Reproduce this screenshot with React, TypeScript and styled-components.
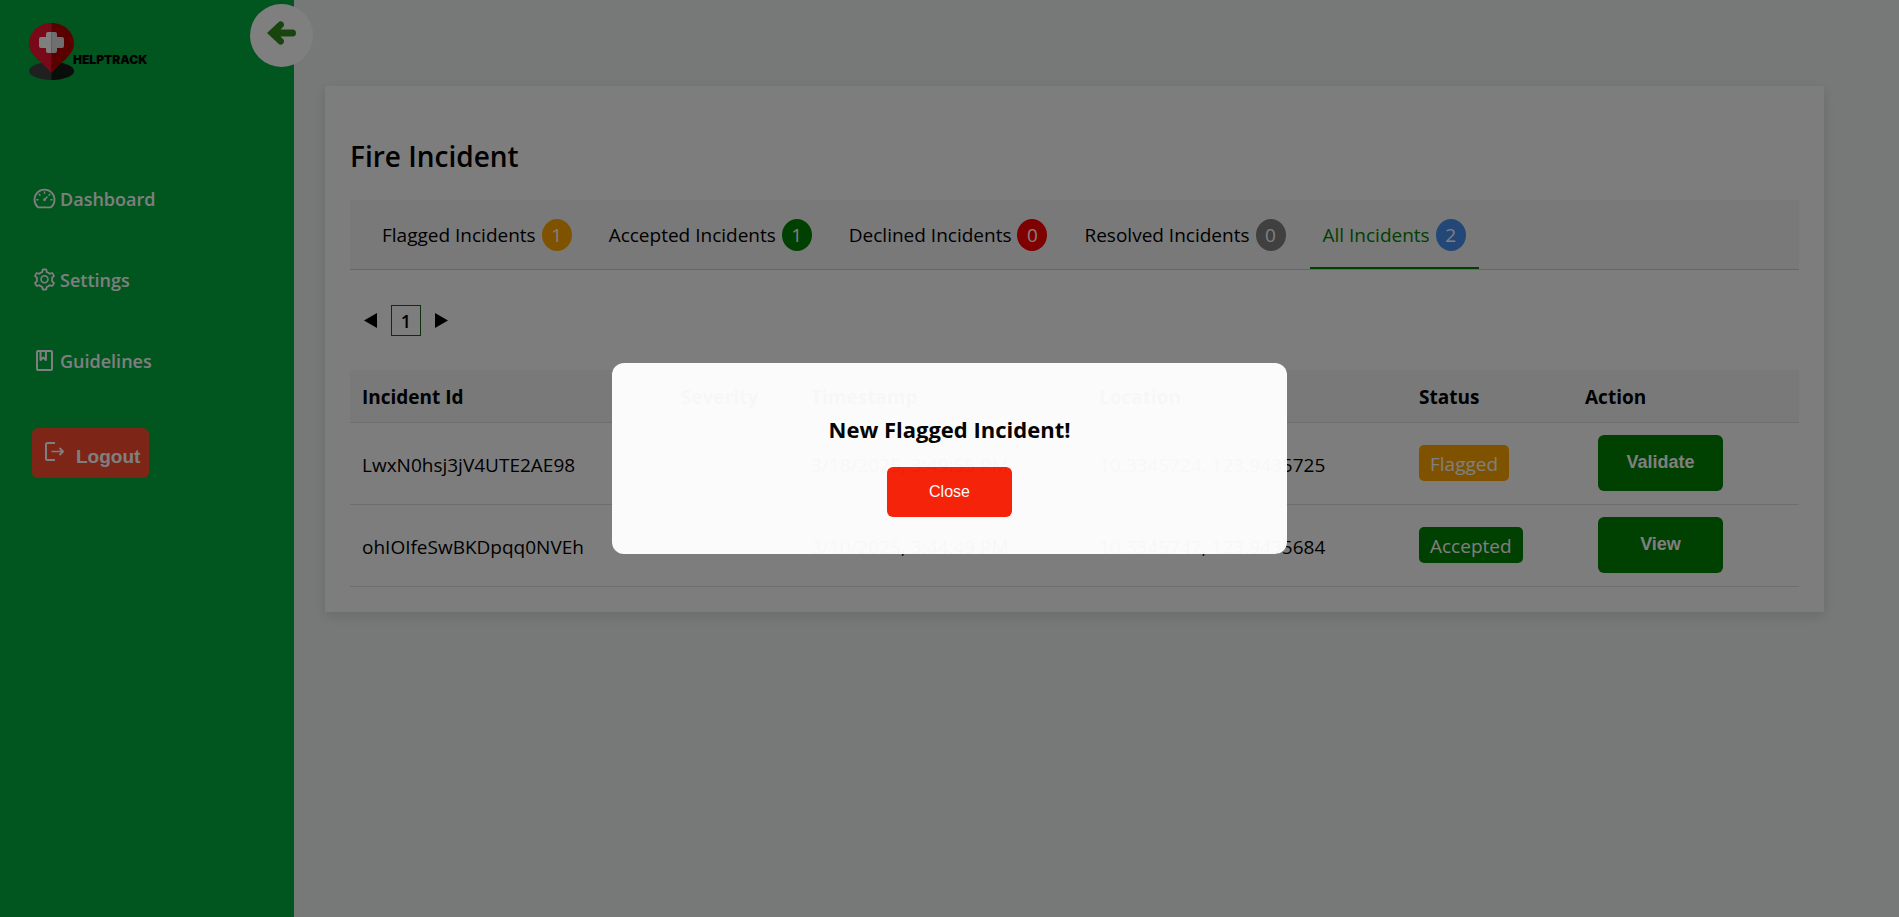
import React from 'react';
import styled, { createGlobalStyle } from 'styled-components';
import { AiOutlineDashboard, AiOutlineSetting } from 'react-icons/ai';

const uiFont = '"Segoe UI", "Open Sans", "Noto Sans", sans-serif';
const controlFont = 'Arial, "Liberation Sans", sans-serif';

const GlobalStyle = createGlobalStyle`
  *, *::before, *::after { box-sizing: border-box; }
  body {
    margin: 0;
    background: #eff3f2;
    color: #000;
    font-family: ${uiFont};
    font-size: 19px;
    line-height: 27px;
  }
`;

const Page = styled.div`
  display: flex;
  min-height: 100vh;
`;

const Sidebar = styled.aside`
  position: relative;
  flex: 0 0 294px;
  background: #00ac3c;
`;

const Brand = styled.a`
  display: flex;
  align-items: flex-end;
  height: 80px;
  padding-left: 29px;
  color: #000;
  text-decoration: none;
`;

const BrandName = styled.span`
  margin: 0 0 13px -1px;
  font: 900 12px/14px Inter, sans-serif;
`;

const Toggle = styled.button`
  position: absolute;
  top: 4px;
  right: -19px;
  display: flex;
  justify-content: center;
  align-items: center;
  width: 63px;
  height: 63px;
  padding: 0 0 6px;
  border: 0;
  border-radius: 50%;
  background: #fff;
  color: #2f8a1b;
`;

const Nav = styled.nav`
  display: flex;
  flex-direction: column;
  align-items: flex-start;
  gap: 54px;
  padding: 105px 32px 0;
`;

const NavLink = styled.a`
  display: flex;
  align-items: center;
  gap: 3px;
  color: #fff;
  font-size: 18px;
  font-weight: 600;
  text-decoration: none;

  svg { width: 25px; height: 25px; }
  span { padding-top: 1px; margin-bottom: -1px; }
`;

const Logout = styled.button`
  display: flex;
  align-items: center;
  gap: 9px;
  height: 50px;
  padding: 0 9px 0 10px;
  border: 0;
  border-radius: 6px;
  background: #fb4b2e;
  color: #fff;
  font: bold 19px/24px ${controlFont};

  svg { width: 25px; height: 25px; margin-bottom: 4px; }
  span { padding-top: 7px; }
`;

const Main = styled.main`
  flex: 1;
  min-width: 0;
  padding: 86px 75px 40px 31px;
`;

const Card = styled.section`
  padding: 50px 25px 25px;
  background: #fafafa;
  box-shadow: 0 4px 12px rgba(0, 0, 0, 0.12);
`;

const Title = styled.h1`
  margin: 0 0 24px;
  font-size: 28px;
  font-weight: 600;
  line-height: 40px;
`;

const Tabs = styled.div`
  display: flex;
  gap: 11px;
  height: 70px;
  padding: 0 19px;
  border-bottom: 1px solid #ccc;
  background: #f2f2f2;
`;

const Tab = styled.button<{ $active?: boolean }>`
  display: flex;
  align-items: center;
  gap: 6px;
  padding: 4px 13px 0;
  border: 0;
  border-bottom: 2px solid ${(p) => (p.$active ? 'green' : 'transparent')};
  background: none;
  color: ${(p) => (p.$active ? 'green' : '#000')};
  font: inherit;
`;

const Count = styled.span<{ $color: string }>`
  width: 30px;
  margin-bottom: 2px;
  border-radius: 50%;
  background: ${(p) => p.$color};
  color: #fff;
  line-height: 32px;
  text-align: center;
`;

const Pager = styled.div`
  display: flex;
  align-items: center;
  gap: 14px;
  padding: 35px 14px 34px;
`;

const PageArrow = styled.button`
  display: flex;
  padding: 0;
  border: 0;
  background: none;
`;

const PageNumber = styled.button`
  width: 30px;
  height: 31px;
  padding: 2px 0 0;
  border: 1px solid #1b5e20;
  background: none;
  color: #000;
  font: 600 18px/27px ${uiFont};
`;

const Table = styled.table`
  width: 100%;
  border-collapse: collapse;
  table-layout: fixed;

  th, td {
    border-bottom: 1px solid #ddd;
    text-align: left;
    white-space: nowrap;
  }
  th {
    height: 52px;
    padding: 4px 12px 0;
    background: #f2f2f2;
    font-weight: 700;
  }
`;

const TextCell = styled.td`
  height: 82px;
  padding: 4px 12px 0;
`;

const ControlCell = styled.td`
  height: 82px;
  padding: 0 12px;
`;

const Status = styled.span<{ $color: string }>`
  display: inline-block;
  padding: 6px 11px 3px;
  border-radius: 5px;
  background: ${(p) => p.$color};
  color: #fff;
`;

const ActionButton = styled.button`
  display: block;
  width: 125px;
  height: 56px;
  margin-left: 13px;
  padding: 0 0 2px;
  border: 0;
  border-radius: 6px;
  background: green;
  color: #fff;
  font: bold 18px/24px ${controlFont};
`;

const Overlay = styled.div`
  position: fixed;
  inset: 0;
  display: flex;
  justify-content: center;
  align-items: center;
  background: rgba(0, 0, 0, 0.5);
`;

const Dialog = styled.div`
  display: flex;
  flex-direction: column;
  align-items: center;
  gap: 22px;
  width: 675px;
  padding: 50px 38px 37px;
  border-radius: 12px;
  background: #fff;
  opacity: 0.97;
`;

const DialogTitle = styled.h2`
  margin: 0;
  font-size: 22px;
  font-weight: 700;
  line-height: 32px;
`;

const CloseButton = styled.button`
  width: 125px;
  height: 50px;
  border: 0;
  border-radius: 6px;
  background: #f82106;
  color: #fff;
  font: 16px/20px ${controlFont};
`;

const tabs = [
  { label: 'Flagged Incidents', count: 1, color: 'orange' },
  { label: 'Accepted Incidents', count: 1, color: 'green' },
  { label: 'Declined Incidents', count: 0, color: 'red' },
  { label: 'Resolved Incidents', count: 0, color: 'gray' },
  { label: 'All Incidents', count: 2, color: '#478eee', active: true },
];

const columns = [
  { name: 'Incident Id', width: 319 },
  { name: 'Severity', width: 130 },
  { name: 'Timestamp', width: 288 },
  { name: 'Location', width: 320 },
  { name: 'Status', width: 166 },
  { name: 'Action', width: 226 },
];

const incidents = [
  {
    id: 'LwxN0hsj3jV4UTE2AE98',
    time: '3/18/2025, 3:49:55 PM',
    location: '10.3345724, 123.9435725',
    status: 'Flagged',
    color: 'orange',
    action: 'Validate',
  },
  {
    id: 'ohIOIfeSwBKDpqq0NVEh',
    time: '3/10/2025, 3:44:49 PM',
    location: '10.3345747, 123.9435684',
    status: 'Accepted',
    color: 'green',
    action: 'View',
  },
];

const PinLogo = () => (
  <svg width="45" height="57" viewBox="0 0 45 57" aria-hidden="true">
    <ellipse cx="22.5" cy="48" rx="22.5" ry="9" fill="#404040" />
    <path d="M22.5 39a22.5 9 0 0 1 0 18z" fill="#151c15" />
    <path d="M22.5 0C10 0 0 9 0 20.5C0 32 13 39 22.5 50z" fill="#ee1230" />
    <path d="M22.5 0C35 0 45 9 45 20.5C45 32 32 39 22.5 50z" fill="#b40000" />
    <path d="M19 9h3.5v21H19a2 2 0 0 1-2-2v-3h-5a2 2 0 0 1-2-2v-7a2 2 0 0 1 2-2h5v-3a2 2 0 0 1 2-2z" fill="#fff" />
    <path d="M22.5 9H26a2 2 0 0 1 2 2v3h5a2 2 0 0 1 2 2v7a2 2 0 0 1-2 2h-5v3a2 2 0 0 1-2 2h-3.5z" fill="#dedede" />
  </svg>
);

const BackArrow = () => (
  <svg width="30" height="26" viewBox="0 0 30 26" aria-hidden="true">
    <path
      d="M0 13L11.500 2.200C14.500-.4 18.500 3.500 16.500 6.500L13.500 9.500H25.500a3.500 3.500 0 0 1 0 7H13.500L16.500 19.500C18.500 22.500 14.500 26.400 11.500 23.800z"
      fill="currentColor"
    />
  </svg>
);

const BookIcon = () => (
  <svg viewBox="0 0 25 25" fill="none" stroke="currentColor" strokeWidth="2" strokeLinejoin="round" aria-hidden="true">
    <rect x="5" y="3" width="15" height="19" rx="1" />
    <path d="M8.500 3v9l2.700-2.500 2.700 2.500V3" />
  </svg>
);

const LogoutIcon = () => (
  <svg viewBox="0 0 25 25" fill="none" stroke="currentColor" strokeWidth="2" aria-hidden="true">
    <path d="M13 4H5.500a1.500 1.500 0 0 0-1.500 1.500v14a1.500 1.500 0 0 0 1.500 1.500H13" />
    <path d="M9.500 12.500H20" strokeWidth="1.500" />
    <path d="M17.500 9l3.500 3.500-3.500 3.500" />
  </svg>
);

export default function App() {
  return (
    <>
      <GlobalStyle />
      <Page>
        <Sidebar>
          <Brand href="#">
            <PinLogo />
            <BrandName>HELPTRACK</BrandName>
          </Brand>
          <Toggle aria-label="Collapse sidebar">
            <BackArrow />
          </Toggle>
          <Nav>
            <NavLink href="#dashboard"><AiOutlineDashboard /><span>Dashboard</span></NavLink>
            <NavLink href="#settings"><AiOutlineSetting /><span>Settings</span></NavLink>
            <NavLink href="#guidelines"><BookIcon /><span>Guidelines</span></NavLink>
            <Logout><LogoutIcon /><span>Logout</span></Logout>
          </Nav>
        </Sidebar>
        <Main>
          <Card>
            <Title>Fire Incident</Title>
            <Tabs role="tablist">
              {tabs.map((tab) => (
                <Tab key={tab.label} role="tab" aria-selected={!!tab.active} $active={tab.active}>
                  {tab.label}
                  <Count $color={tab.color}>{tab.count}</Count>
                </Tab>
              ))}
            </Tabs>
            <Pager>
              <PageArrow aria-label="Previous page">
                <svg width="13" height="15" viewBox="0 0 13 15"><path d="M13 0v15L0 7.5z" /></svg>
              </PageArrow>
              <PageNumber>1</PageNumber>
              <PageArrow aria-label="Next page">
                <svg width="13" height="15" viewBox="0 0 13 15"><path d="M0 0v15l13-7.5z" /></svg>
              </PageArrow>
            </Pager>
            <Table>
              <colgroup>
                {columns.map((c) => <col key={c.name} width={c.width} />)}
              </colgroup>
              <thead>
                <tr>{columns.map((c) => <th key={c.name}>{c.name}</th>)}</tr>
              </thead>
              <tbody>
                {incidents.map((row) => (
                  <tr key={row.id}>
                    <TextCell>{row.id}</TextCell>
                    <TextCell />
                    <TextCell>{row.time}</TextCell>
                    <TextCell>{row.location}</TextCell>
                    <ControlCell><Status $color={row.color}>{row.status}</Status></ControlCell>
                    <ControlCell><ActionButton>{row.action}</ActionButton></ControlCell>
                  </tr>
                ))}
              </tbody>
            </Table>
          </Card>
        </Main>
      </Page>
      <Overlay>
        <Dialog role="dialog" aria-modal="true" aria-labelledby="dialog-title">
          <DialogTitle id="dialog-title">New Flagged Incident!</DialogTitle>
          <CloseButton>Close</CloseButton>
        </Dialog>
      </Overlay>
    </>
  );
}
